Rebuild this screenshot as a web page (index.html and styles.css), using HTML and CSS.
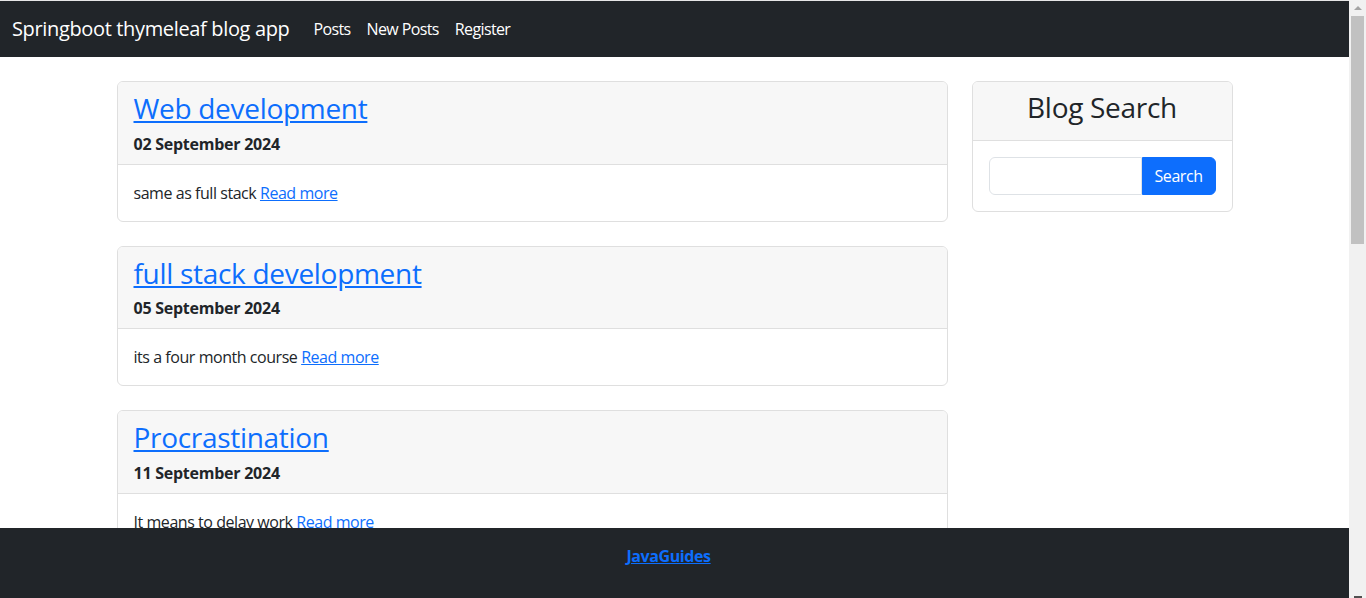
FILE: index.html
```html
<!DOCTYPE html>
<html lang="en">
<head>
<meta charset="utf-8">
<title>Springboot thymeleaf blog app</title>
<link rel="stylesheet" href="styles.css">
</head>
<body>
<div class="page">
  <nav class="navbar">
    <a class="brand" href="#">Springboot thymeleaf blog app</a>
    <ul class="nav">
      <li><a class="nav-link" href="#">Posts</a></li>
      <li><a class="nav-link" href="#">New Posts</a></li>
      <li><a class="nav-link" href="#">Register</a></li>
    </ul>
  </nav>
  <div class="container">
    <div class="posts">
      <div class="card post">
        <div class="card-header">
          <h3 class="post-title"><a href="#">Web development</a></h3>
          <div class="post-date">02 September 2024</div>
        </div>
        <div class="card-body">same as full stack <a href="#">Read more</a></div>
      </div>
      <div class="card post">
        <div class="card-header">
          <h3 class="post-title"><a href="#">full stack development</a></h3>
          <div class="post-date">05 September 2024</div>
        </div>
        <div class="card-body">its a four month course <a href="#">Read more</a></div>
      </div>
      <div class="card post">
        <div class="card-header">
          <h3 class="post-title"><a href="#">Procrastination</a></h3>
          <div class="post-date">11 September 2024</div>
        </div>
        <div class="card-body">It means to delay work <a href="#">Read more</a></div>
      </div>
    </div>
    <aside class="sidebar">
      <div class="card">
        <div class="card-header search-header">
          <h3 class="search-title">Blog Search</h3>
        </div>
        <div class="card-body">
          <form class="input-group">
            <input class="form-control" type="text" aria-label="search">
            <button class="btn" type="button">Search</button>
          </form>
        </div>
      </div>
    </aside>
  </div>
  <footer class="footer"><a href="#">JavaGuides</a></footer>
</div>
<div class="scrollbar">
  <div class="arrow-up"></div>
  <div class="thumb"></div>
  <div class="track"></div>
  <div class="arrow-down"></div>
</div>
</body>
</html>
```
FILE: styles.css
```css
* { box-sizing: border-box; }
html, body { height: 100%; }
body {
  margin: 0;
  display: flex;
  overflow: hidden;
  font-family: "Open Sans", "Noto Sans", sans-serif;
  font-size: 16px;
  line-height: 1.5;
  letter-spacing: -0.45px;
  color: #212529;
  background: #fff;
}
a { color: #0d6efd; }
.page {
  flex: 1;
  min-width: 0;
  border-top: 1px solid #e6e6e6;
}
.navbar {
  height: 56px;
  background: #212529;
  display: flex;
  align-items: center;
  padding: 0 12px;
}
.brand {
  color: #fff;
  text-decoration: none;
  font-size: 20px;
  line-height: 30px;
  letter-spacing: -0.35px;
  margin-right: 16px;
}
.nav {
  list-style: none;
  display: flex;
  margin: 0;
  padding: 0;
}
.nav-link {
  display: block;
  padding: 8px;
  color: #fff;
  text-decoration: none;
  font-size: 16px;
  letter-spacing: -0.62px;
}
.container {
  width: 1140px;
  margin: 0 auto;
  display: flex;
  gap: 24px;
  padding: 0 12px;
}
.posts { width: 831px; }
.sidebar { width: 261px; }
.card {
  margin-top: 24px;
  border: 1px solid #dfdfdf;
  border-radius: 6px;
  background: #fff;
  overflow: hidden;
}
.card-header {
  background: #f7f7f7;
  border-bottom: 1px solid #dfdfdf;
  padding: 8px 16px;
}
.post-title {
  margin: 0 0 6px;
  padding-top: 2px;
  font-size: 28px;
  font-weight: 500;
  line-height: 33.6px;
  letter-spacing: -0.3px;
}
.post-date {
  font-weight: 700;
  line-height: 24px;
  letter-spacing: -0.25px;
}
.card-body { padding: 16px; }
.search-header { text-align: center; }
.search-title {
  margin: 0 0 7px;
  padding-top: 1px;
  font-size: 28px;
  font-weight: 500;
  line-height: 33.6px;
  letter-spacing: -0.3px;
}
.input-group { display: flex; margin: 0; }
.form-control {
  flex: 1;
  min-width: 0;
  height: 38px;
  border: 1px solid #dee2e6;
  border-radius: 6px 0 0 6px;
  padding: 6px 12px;
  font: inherit;
}
.btn {
  height: 38px;
  border: 1px solid #0d6efd;
  background: #0d6efd;
  color: #fff;
  border-radius: 0 6px 6px 0;
  padding: 6px 12px;
  font: inherit;
  letter-spacing: -0.45px;
}
.footer {
  position: fixed;
  left: 0;
  right: 17px;
  bottom: 0;
  height: 70px;
  background: #212529;
  text-align: center;
  padding: 16px 12px 0 0;
  font-weight: 700;
  letter-spacing: -0.4px;
}
.scrollbar {
  width: 17px;
  flex: none;
  background: #f1f1f1;
  display: flex;
  flex-direction: column;
  align-items: center;
}
.arrow-up {
  margin-top: 6px;
  width: 0; height: 0;
  border-left: 4px solid transparent;
  border-right: 4px solid transparent;
  border-bottom: 4px solid #a3a3a3;
}
.thumb {
  margin-top: 6px;
  width: 13px;
  height: 228px;
  background: #c1c1c1;
}
.track { flex: 1; }
.arrow-down {
  width: 8px;
  height: 2px;
  background: #505050;
}
```
